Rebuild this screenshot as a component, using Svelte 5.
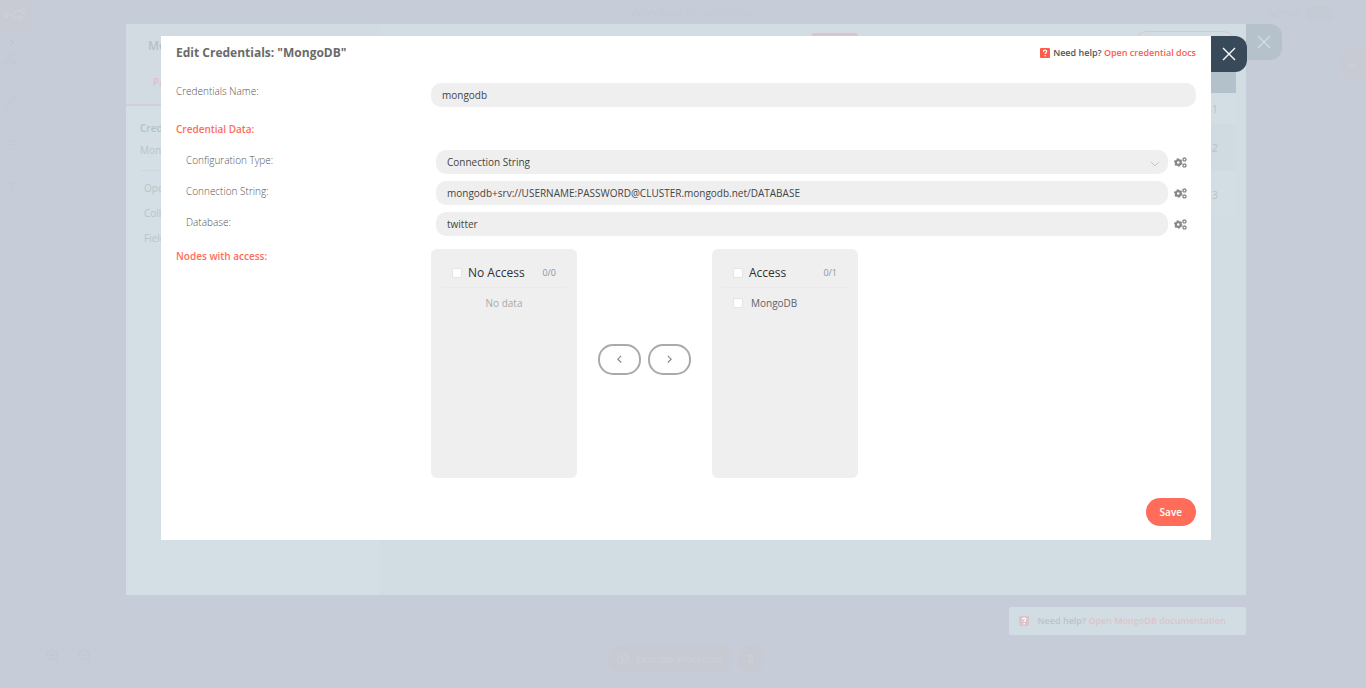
<script lang="ts">
  type Field = { id: string; label: string; value: string; options?: string[] };

  let credentialName = $state('mongodb');

  let fields: Field[] = $state([
    { id: 'configurationType', label: 'Configuration Type', value: 'Connection String', options: ['Connection String', 'Values'] },
    { id: 'connectionString', label: 'Connection String', value: 'mongodb+srv://USERNAME:PASSWORD@CLUSTER.mongodb.net/DATABASE' },
    { id: 'database', label: 'Database', value: 'twitter' },
  ]);

  let noAccess: string[] = $state([]);
  let access: string[] = $state(['MongoDB']);
  let checked: string[] = $state([]);

  const revoke = () => {
    noAccess = [...noAccess, ...access.filter((n) => checked.includes(n))];
    access = access.filter((n) => !checked.includes(n));
    checked = [];
  };

  const grant = () => {
    access = [...access, ...noAccess.filter((n) => checked.includes(n))];
    noAccess = noAccess.filter((n) => !checked.includes(n));
    checked = [];
  };

  const parameters = ['Operation', 'Collection', 'Fields'];
  const rows = ['51', '52', '53'];
</script>

{#snippet cross()}
  <svg class="cross" viewBox="0 0 14 14" aria-hidden="true"><path d="M1 1l12 12M13 1L1 13" /></svg>
{/snippet}

{#snippet helpIcon()}
  <svg class="helpIcon" viewBox="0 0 10 10" aria-hidden="true">
    <rect width="10" height="10" rx="1" fill="currentColor" />
    <path d="M3.4 3.7C3.5 1.6 6.7 1.7 6.7 3.6C6.7 4.8 5.1 4.7 5.1 6.1" fill="none" stroke="#fff" stroke-width="1.2" />
    <circle cx="5.1" cy="7.8" r="0.8" fill="#fff" />
  </svg>
{/snippet}

{#snippet gears()}
  <svg class="gears" viewBox="0 0 26 22" aria-hidden="true">
    <circle cx="8.5" cy="11" r="4.8" fill="none" stroke="currentColor" stroke-width="4.4" />
    <circle cx="8.5" cy="11" r="7.2" fill="none" stroke="currentColor" stroke-width="2.6" stroke-dasharray="3.77 3.77" />
    <circle cx="21" cy="5" r="2.9" fill="none" stroke="currentColor" stroke-width="2.4" />
    <circle cx="21" cy="5" r="4.4" fill="none" stroke="currentColor" stroke-width="1.2" stroke-dasharray="1.7 1.7" />
    <circle cx="21" cy="17" r="2.9" fill="none" stroke="currentColor" stroke-width="2.4" />
    <circle cx="21" cy="17" r="4.4" fill="none" stroke="currentColor" stroke-width="1.2" stroke-dasharray="1.7 1.7" />
  </svg>
{/snippet}

{#snippet panel(title: string, items: string[])}
  <section class="panel">
    <label class="panelHead">
      <input type="checkbox" />
      <span class="panelTitle">{title}</span>
      <span class="count">0/{items.length}</span>
    </label>
    {#each items as item}
      <label class="panelItem">
        <input type="checkbox" value={item} bind:group={checked} />
        <span>{item}</span>
      </label>
    {:else}
      <p class="noData">No data</p>
    {/each}
  </section>
{/snippet}

<div class="app">
  <div class="editor">
    <nav class="sidebar" aria-label="Main">
      <a class="logo" href="#home" aria-label="Home">
        <svg viewBox="0 0 24 14"><path d="M5 8h4l4-4h5M9 8l4 3h4" /><circle cx="3" cy="8" r="2" /><circle cx="20" cy="4" r="2" /><circle cx="17" cy="11" r="2" /></svg>
      </a>
      <button class="expand" aria-label="Expand"><svg viewBox="0 0 10 10"><path d="M3 1l4 4-4 4" /></svg></button>
      <a href="#workflows" aria-label="Workflows"><svg viewBox="0 0 14 12"><path d="M5 1h4v3H5zM7 4v3M2 10V7h10v3M1 9h3v2H1zM6 9h3v2H6zM10 9h3v2h-3z" /></svg></a>
      <a href="#credentials" aria-label="Credentials"><svg viewBox="0 0 14 12"><path d="M2 11l5-5M7 6V3l3-2h2v3l-2 2z" stroke-width="2" /></svg></a>
      <a href="#executions" aria-label="Executions"><svg viewBox="0 0 14 12"><path d="M1 2h2M5 2h8M1 6h2M5 6h8M1 10h2M5 10h8" /></svg></a>
      <a href="#help" aria-label="Help"><svg viewBox="0 0 14 12"><path d="M4 3c0-3 6-3 6 0 0 2-3 2-3 5M7 10v2" stroke-width="2" /></svg></a>
    </nav>
    <header class="topbar">
      <p class="workflowName">Workflow: <span>My workflow</span></p>
      <label class="active">Active: <input type="checkbox" role="switch" /></label>
    </header>
    <div class="canvas">
      <button class="round" aria-label="Add node">+</button>
    </div>
    <footer class="bottombar">
      <div class="zoom">
        <button aria-label="Zoom in"><svg viewBox="0 0 14 14"><circle cx="6" cy="6" r="5" /><path d="M10 10l3 3M3 6h6M6 3v6" /></svg></button>
        <button aria-label="Zoom out"><svg viewBox="0 0 14 14"><circle cx="6" cy="6" r="5" /><path d="M10 10l3 3M3 6h6" /></svg></button>
      </div>
      <div class="run">
        <button class="execute"><svg viewBox="0 0 14 14"><circle cx="7" cy="7" r="5" /><path d="M6 5l3 2-3 2z" /></svg>Execute Workflow</button>
        <button class="trash" aria-label="Clear execution"><svg viewBox="0 0 10 12"><path d="M1 2h8M3 4h4v6H3z" /></svg></button>
      </div>
    </footer>
  </div>

  <div class="overlay nodeOverlay">
    <div class="nodeDialog">
      <div class="settings">
        <div class="settingsHead">
          <h2>MongoDB</h2>
          <p class="tab">Parameters</p>
        </div>
        <div class="settingsBody">
          <h3>Credentials</h3>
          <p class="credential">MongoDB</p>
          {#each parameters as parameter}
            <p class="parameter">{parameter}:</p>
          {/each}
        </div>
      </div>
      <div class="output">
        <div class="outputBar">
          <span class="viewTab"></span>
          <button class="executeNode" aria-label="Execute node"></button>
        </div>
        <div class="outputHead"></div>
        {#each rows as row}
          <div class="outputRow">{row}</div>
        {/each}
      </div>
    </div>
    <button class="close" aria-label="Close node">{@render cross()}</button>
    <p class="docs">{@render helpIcon()}<span>Need help? <a href="#docs">Open MongoDB documentation</a></span></p>
  </div>

  <div class="overlay credentialOverlay">
    <div class="credentialDialog" role="dialog" aria-labelledby="dialogTitle">
      <header class="dialogHead">
        <h1 id="dialogTitle">Edit Credentials: "MongoDB"</h1>
        <p class="help">{@render helpIcon()}<span>Need help? <a href="#credential-docs">Open credential docs</a></span></p>
      </header>

      <div class="row nameRow">
        <label for="credentialName">Credentials Name:</label>
        <input id="credentialName" type="text" bind:value={credentialName} />
      </div>

      <h2 class="heading">Credential Data:</h2>
      <div class="fields">
        {#each fields as field}
          <div class="row">
            <label for={field.id}>{field.label}:</label>
            {#if field.options}
              <div class="selectBox">
                <select id={field.id} bind:value={field.value}>
                  {#each field.options as option}
                    <option>{option}</option>
                  {/each}
                </select>
                <svg viewBox="0 0 10 6" aria-hidden="true"><path d="M1 1l4 4 4-4" /></svg>
              </div>
            {:else}
              <input id={field.id} type="text" bind:value={field.value} />
            {/if}
            <button class="options" aria-label="{field.label} options">{@render gears()}</button>
          </div>
        {/each}
      </div>

      <div class="row accessRow">
        <h2 class="heading">Nodes with access:</h2>
        <div class="transfer">
          {@render panel('No Access', noAccess)}
          <div class="transferButtons">
            <button aria-label="Revoke access" onclick={revoke}><svg viewBox="0 0 6 10"><path d="M5 1L1 5l4 4" /></svg></button>
            <button aria-label="Grant access" onclick={grant}><svg viewBox="0 0 6 10"><path d="M1 1l4 4-4 4" /></svg></button>
          </div>
          {@render panel('Access', access)}
        </div>
      </div>

      <footer class="dialogFoot">
        <button class="save">Save</button>
      </footer>
    </div>
    <button class="close" aria-label="Close">{@render cross()}</button>
  </div>
</div>

<style>
  :global(body) {
    background: #c7cdd8;
  }

  .app {
    position: relative;
    min-height: 100vh;
    overflow: hidden;
    font-family: 'Open Sans', sans-serif;
    font-size: 10px;
    line-height: 16px;
    color: #555;
  }

  .app * {
    box-sizing: border-box;
  }

  h1,
  h2,
  h3,
  p {
    margin: 0;
  }

  button,
  input,
  select {
    font: inherit;
    color: inherit;
    border: 0;
    padding: 0;
    margin: 0;
    background: none;
  }

  button {
    cursor: pointer;
  }

  a {
    text-decoration: none;
  }

  svg {
    display: block;
    flex: none;
  }

  /* editor */
  .editor {
    display: grid;
    grid-template: 36px 1fr 60px / 33px 1fr;
    min-height: 100vh;
    color: #c3c9d3;
  }

  .editor svg {
    width: 14px;
    fill: none;
    stroke: currentColor;
    stroke-width: 1.5;
  }

  .sidebar {
    grid-row: 1 / 4;
    display: flex;
    flex-direction: column;
    padding-right: 12px;
  }

  .sidebar a {
    height: 43px;
    padding-left: 3px;
    color: #c6c9d4;
  }

  .sidebar .logo {
    width: 33px;
    height: 32px;
    padding: 7px 3px;
    background: #c8cad4;
    color: #cbd0da;
  }

  .sidebar .logo svg {
    width: 24px;
  }

  .expand {
    height: 21px;
    padding-left: 8px;
    color: #bec6d0;
  }

  .sidebar .expand svg {
    width: 8px;
  }

  .topbar {
    display: flex;
    align-items: center;
    justify-content: space-between;
    padding: 0 33px 10px 598px;
    font-size: 11px;
  }

  .workflowName span {
    color: #c8cad5;
  }

  .active {
    display: flex;
    align-items: center;
    gap: 4px;
  }

  .active input {
    appearance: none;
    width: 28px;
    height: 14px;
    border-radius: 7px;
    background: #c5cbd5;
  }

  .canvas {
    display: flex;
    justify-content: flex-end;
    align-items: flex-start;
    padding-top: 12px;
  }

  .round {
    width: 28px;
    height: 32px;
    border-radius: 16px 0 0 16px;
    background: #c8cad4;
    color: #cbd0da;
    font-size: 18px;
  }

  .bottombar {
    display: flex;
    padding: 17px 0 0 13px;
  }

  .zoom {
    display: flex;
    gap: 18px;
    width: 561px;
  }

  .zoom button {
    width: 14px;
    height: 22px;
  }

  .run {
    display: flex;
    gap: 6px;
  }

  .execute,
  .trash {
    display: flex;
    align-items: center;
    justify-content: center;
    gap: 6px;
    width: 125px;
    height: 28px;
    border-radius: 14px;
    background: #c8cad3;
    color: #cacfd9;
    font-weight: 600;
  }

  .trash {
    width: 26px;
  }

  .trash svg {
    width: 8px;
  }

  /* dialogs lie over the editor */
  .overlay {
    position: absolute;
    inset: 0;
    display: grid;
    align-content: start;
    align-items: start;
  }

  .close {
    display: grid;
    place-items: center;
    width: 36px;
    height: 36px;
    border-radius: 0 12px 12px 0;
    background: #384959;
    color: #fff;
  }

  .cross {
    width: 14px;
    fill: none;
    stroke: currentColor;
    stroke-width: 1.4;
  }

  .helpIcon {
    width: 10px;
    color: #ff5a4a;
  }

  .nodeOverlay {
    grid-template-columns: 1fr 120px;
    grid-template-rows: 571px auto;
    row-gap: 12px;
    padding: 24px 0 0 126px;
    color: #b9c3cb;
  }

  .nodeOverlay .close {
    background: #b5c2cc;
    color: #d2dbe2;
  }

  .nodeDialog {
    display: grid;
    grid-template-columns: 254px 1fr;
    height: 100%;
    background: #d2dde3;
  }

  .settings {
    background: #d3dfe4;
  }

  .settingsHead {
    height: 82px;
    padding: 12px 22px;
    background: #d2dae2;
    border-bottom: 2px solid #cfd0d8;
  }

  .settingsHead h2 {
    font-size: 12px;
    line-height: 20px;
    font-weight: 600;
    color: #b4c0c9;
  }

  .tab {
    padding: 18px 5px;
    font-weight: 600;
    color: #dfbfc6;
  }

  .settingsBody {
    padding: 14px;
  }

  .settingsBody h3 {
    font-size: 10px;
    font-weight: 600;
    color: #b5c0c9;
  }

  .credential {
    padding: 6px 0 12px;
    margin-bottom: 9px;
    border-bottom: 1px solid #cdd7de;
  }

  .parameter {
    padding-left: 4px;
    margin-bottom: 9px;
  }

  .output {
    padding: 7px 10px;
  }

  .outputBar {
    display: flex;
    align-items: flex-start;
    justify-content: flex-end;
    gap: 276px;
    height: 41px;
  }

  .viewTab {
    width: 46px;
    height: 16px;
    margin-top: 2px;
    border-radius: 2px;
    background: #dbc3c9;
  }

  .executeNode {
    width: 102px;
    height: 26px;
    border: 1px solid #d8c8ce;
    border-radius: 13px;
  }

  .outputHead {
    height: 21px;
    background: #b3c1ca;
  }

  .outputRow {
    display: flex;
    align-items: center;
    justify-content: flex-end;
    height: 47px;
    padding-right: 18px;
    background: #d0dae1;
    font-size: 11px;
  }

  .outputRow:nth-child(odd) {
    background: #d3dee4;
  }

  .outputRow:nth-child(3) {
    height: 31px;
  }

  .docs {
    display: flex;
    align-items: center;
    justify-self: end;
    gap: 9px;
    height: 28px;
    padding: 0 20px 0 10px;
    border-radius: 2px;
    background: #d2dce3;
    font-size: 9px;
    font-weight: 600;
  }

  .docs a,
  .docs .helpIcon {
    color: #dfc3ca;
  }

  /* credentials */
  .credentialOverlay {
    grid-template-columns: 1fr 155px;
    padding: 36px 0 0 161px;
  }

  .credentialDialog {
    padding: 8px 15px 14px;
    background: #fff;
  }

  .dialogHead {
    display: flex;
    justify-content: space-between;
    align-items: center;
    height: 18px;
  }

  .dialogHead h1 {
    font-size: 12px;
    line-height: 18px;
    font-weight: 700;
    color: #6a6a6a;
  }

  .help {
    display: flex;
    align-items: center;
    gap: 3px;
    font-size: 9px;
    font-weight: 600;
  }

  .help a {
    color: #ff5a4a;
  }

  .row {
    display: grid;
    grid-template-columns: 250px 1fr 28px;
  }

  .row label {
    font-weight: 300;
  }

  .fields label {
    padding-top: 2px;
  }

  .nameRow {
    grid-template-columns: 255px 1fr;
    padding-top: 21px;
  }

  .row input[type='text'],
  .row select {
    width: 100%;
    height: 24px;
    padding: 0 11px;
    border-radius: 10px;
    background: #efefef;
    color: #444;
  }

  .heading {
    font-size: 10px;
    line-height: 14px;
    font-weight: 600;
    color: #ff6d5a;
  }

  .nameRow + .heading {
    padding-top: 15px;
  }

  .fields {
    display: grid;
    gap: 7px;
    padding: 14px 0 13px 10px;
  }

  .selectBox {
    display: grid;
    align-items: center;
  }

  .selectBox > * {
    grid-area: 1 / 1;
  }

  .row select {
    appearance: none;
  }

  .selectBox svg {
    justify-self: end;
    width: 10px;
    margin: 4px 8px 0;
    fill: none;
    stroke: #c0c4cc;
    pointer-events: none;
  }

  .options {
    display: grid;
    place-items: center start;
    padding-left: 6px;
    color: #888;
  }

  .gears {
    width: 13px;
  }

  .accessRow {
    grid-template-columns: 255px 1fr;
  }

  .transfer {
    display: flex;
    align-items: center;
    gap: 21px;
  }

  .panel {
    width: 146px;
    height: 229px;
    border-radius: 6px;
    padding: 9px 10px;
    background: #efefef;
  }

  .panel label {
    display: flex;
    align-items: center;
    height: 30px;
    padding: 0 11px;
  }

  .row .panelHead {
    gap: 6px;
    border-bottom: 1px solid #ebebee;
    font-weight: 400;
  }

  .row .panelItem {
    gap: 8px;
    font-weight: 400;
    color: #606266;
  }

  .panel input {
    appearance: none;
    width: 10px;
    height: 10px;
    border: 1px solid #e2e4ea;
    border-radius: 2px;
    background: #fff;
  }

  .panel input:checked {
    background: #ff6d5a;
  }

  .panelTitle {
    font-size: 12px;
    color: #303133;
  }

  .count {
    margin-left: auto;
    font-size: 9px;
    color: #909399;
  }

  .noData {
    line-height: 30px;
    text-align: center;
    color: #aaa;
  }

  .transferButtons {
    display: flex;
    gap: 7px;
    padding-bottom: 8px;
  }

  .transferButtons button {
    display: grid;
    place-items: center;
    width: 43px;
    height: 31px;
    border: 2px solid #aaa;
    border-radius: 15px;
  }

  .transferButtons svg {
    width: 5px;
    fill: none;
    stroke: #888;
    stroke-width: 1.4;
  }

  .dialogFoot {
    display: flex;
    justify-content: flex-end;
    padding-top: 20px;
  }

  .save {
    height: 28px;
    padding: 0 14px;
    border-radius: 14px;
    background: #ff6d5a;
    color: #fff;
    font-weight: 600;
  }
</style>
